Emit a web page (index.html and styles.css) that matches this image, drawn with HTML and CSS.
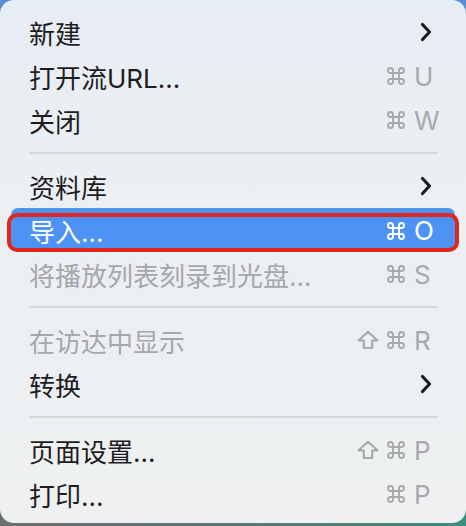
FILE: index.html
```html
<!DOCTYPE html>
<html lang="zh-CN">
<head>
<meta charset="utf-8">
<link rel="stylesheet" href="styles.css">
</head>
<body>
<div class="menu">
  <div class="row"><span class="label">新建</span><svg class="chev" viewBox="0 0 12 20" width="12" height="20"><path d="M2.5 2.5 L9.5 10 L2.5 17.5"/></svg></div>
  <div class="row"><span class="label">打开流URL...</span><span class="sc"><svg class="cmd" viewBox="0 0 18 18" width="18" height="18"><path d="M6 6 V3.5 A2.5 2.5 0 1 0 3.5 6 H14.5 A2.5 2.5 0 1 0 12 3.5 V14.5 A2.5 2.5 0 1 0 14.5 12 H3.5 A2.5 2.5 0 1 0 6 14.5 Z"/></svg><span class="key">U</span></span></div>
  <div class="row"><span class="label">关闭</span><span class="sc"><svg class="cmd" viewBox="0 0 18 18" width="18" height="18"><path d="M6 6 V3.5 A2.5 2.5 0 1 0 3.5 6 H14.5 A2.5 2.5 0 1 0 12 3.5 V14.5 A2.5 2.5 0 1 0 14.5 12 H3.5 A2.5 2.5 0 1 0 6 14.5 Z"/></svg><span class="key">W</span></span></div>
  <div class="sep"></div>
  <div class="row"><span class="label">资料库</span><svg class="chev" viewBox="0 0 12 20" width="12" height="20"><path d="M2.5 2.5 L9.5 10 L2.5 17.5"/></svg></div>
  <div class="row active"><span class="label">导入...</span><span class="sc"><svg class="cmd" viewBox="0 0 18 18" width="18" height="18"><path d="M6 6 V3.5 A2.5 2.5 0 1 0 3.5 6 H14.5 A2.5 2.5 0 1 0 12 3.5 V14.5 A2.5 2.5 0 1 0 14.5 12 H3.5 A2.5 2.5 0 1 0 6 14.5 Z"/></svg><span class="key">O</span></span><div class="mark"></div></div>
  <div class="row disabled"><span class="label">将播放列表刻录到光盘...</span><span class="sc"><svg class="cmd" viewBox="0 0 18 18" width="18" height="18"><path d="M6 6 V3.5 A2.5 2.5 0 1 0 3.5 6 H14.5 A2.5 2.5 0 1 0 12 3.5 V14.5 A2.5 2.5 0 1 0 14.5 12 H3.5 A2.5 2.5 0 1 0 6 14.5 Z"/></svg><span class="key">S</span></span></div>
  <div class="sep"></div>
  <div class="row disabled"><span class="label">在访达中显示</span><span class="sc"><svg class="shift" viewBox="0 0 22 20" width="22" height="20"><path d="M11 1.8 L20.5 10.5 H15.2 V18 H6.8 V10.5 H1.5 Z"/></svg><svg class="cmd" viewBox="0 0 18 18" width="18" height="18"><path d="M6 6 V3.5 A2.5 2.5 0 1 0 3.5 6 H14.5 A2.5 2.5 0 1 0 12 3.5 V14.5 A2.5 2.5 0 1 0 14.5 12 H3.5 A2.5 2.5 0 1 0 6 14.5 Z"/></svg><span class="key">R</span></span></div>
  <div class="row"><span class="label">转换</span><svg class="chev" viewBox="0 0 12 20" width="12" height="20"><path d="M2.5 2.5 L9.5 10 L2.5 17.5"/></svg></div>
  <div class="sep"></div>
  <div class="row"><span class="label">页面设置...</span><span class="sc"><svg class="shift" viewBox="0 0 22 20" width="22" height="20"><path d="M11 1.8 L20.5 10.5 H15.2 V18 H6.8 V10.5 H1.5 Z"/></svg><svg class="cmd" viewBox="0 0 18 18" width="18" height="18"><path d="M6 6 V3.5 A2.5 2.5 0 1 0 3.5 6 H14.5 A2.5 2.5 0 1 0 12 3.5 V14.5 A2.5 2.5 0 1 0 14.5 12 H3.5 A2.5 2.5 0 1 0 6 14.5 Z"/></svg><span class="key">P</span></span></div>
  <div class="row"><span class="label">打印...</span><span class="sc"><svg class="cmd" viewBox="0 0 18 18" width="18" height="18"><path d="M6 6 V3.5 A2.5 2.5 0 1 0 3.5 6 H14.5 A2.5 2.5 0 1 0 12 3.5 V14.5 A2.5 2.5 0 1 0 14.5 12 H3.5 A2.5 2.5 0 1 0 6 14.5 Z"/></svg><span class="key">P</span></span></div>
</div>
</body>
</html>
```
FILE: styles.css
```css
html, body {
  margin: 0;
  padding: 0;
}
body {
  width: 466px;
  height: 526px;
  overflow: hidden;
  background:
    linear-gradient(180deg, rgba(90,140,215,1) 0px, rgba(90,140,215,0) 60px),
    linear-gradient(90deg, #6b7070 0%, #5a7a76 60%, #3c8d7f 100%);
  font-family: Inter, "Noto Sans", "Noto Sans CJK SC", sans-serif;
}
.menu {
  box-sizing: border-box;
  height: 523px;
  border-radius: 14px;
  padding: 10px 11px 7px;
  background: linear-gradient(180deg, #e7edf4 0%, #ebeff3 30%, #eef0f1 100%);
}
.row {
  position: relative;
  height: 44px;
  display: flex;
  align-items: center;
  justify-content: space-between;
  padding: 0 22px 0 18px;
  font-size: 26px;
  color: #1d1d1f;
  font-family: Inter, "Noto Sans CJK SC", sans-serif;
}
.disabled {
  color: #a6a7a8;
}
.active {
  height: 42px;
  margin-top: 0;
  margin-bottom: 2px;
  padding-top: 3px;
  box-sizing: border-box;
  background: #4d93f6;
  border-radius: 7px;
  color: #ffffff;
}
.mark {
  position: absolute;
  top: 5px;
  left: -4px;
  right: -4px;
  bottom: -2px;
  border: 4px solid #e0261d;
  border-radius: 10px;
}
.sc {
  display: flex;
  align-items: center;
  color: #a8a9aa;
}
.active .sc {
  color: #ffffff;
}
.cmd {
  display: block;
  margin-left: 8px;
}
.cmd path {
  fill: none;
  stroke: currentColor;
  stroke-width: 1.9;
}
.key {
  width: 23px;
  text-align: left;
  margin-left: 9px;
  margin-right: -4px;
}
.shift {
  display: block;
}
.shift path {
  fill: none;
  stroke: #a8a9aa;
  stroke-width: 2.2;
  stroke-linejoin: round;
}
.chev {
  display: block;
  margin-right: 1px;
}
.chev path {
  fill: none;
  stroke: #1d1d1f;
  stroke-width: 3.2;
  stroke-linecap: round;
  stroke-linejoin: round;
}
.sep {
  height: 2px;
  margin: 10px 18px;
  background: #d6d8da;
}
```
